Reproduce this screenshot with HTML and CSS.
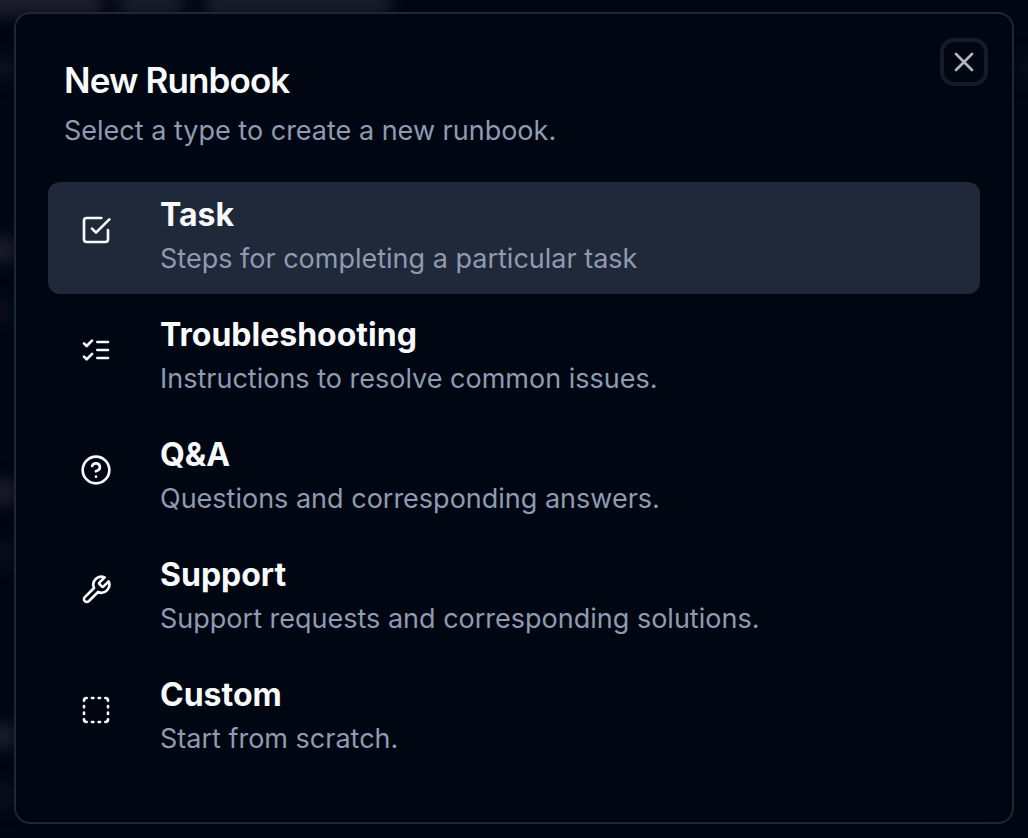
FILE: index.html
```html
<!DOCTYPE html>
<html lang="en">
<head>
<meta charset="utf-8">
<meta name="viewport" content="width=device-width, initial-scale=1">
<title>New Runbook</title>
<link rel="stylesheet" href="styles.css">
</head>
<body>
<div class="backdrop" aria-hidden="true"></div>
<main class="dialog" role="dialog" aria-labelledby="dialog-title" aria-describedby="dialog-description">
  <button class="close" type="button" aria-label="Close">
    <svg class="icon" viewBox="0 0 24 24"><path d="M18 6 6 18M6 6l12 12"/></svg>
  </button>
  <header class="header">
    <h1 class="title" id="dialog-title">New Runbook</h1>
    <p class="description" id="dialog-description">Select a type to create a new runbook.</p>
  </header>
  <div class="options">
    <button class="option option-active" type="button">
      <svg class="icon" viewBox="0 0 24 24" aria-hidden="true"><path d="m9 11 3 3L22 4"/><path d="M21 12v7a2 2 0 0 1-2 2H5a2 2 0 0 1-2-2V5a2 2 0 0 1 2-2h11"/></svg>
      <span class="option-text"><span class="option-name">Task</span><span class="option-detail">Steps for completing a particular task</span></span>
    </button>
    <button class="option" type="button">
      <svg class="icon" viewBox="0 0 24 24" aria-hidden="true"><path d="m3 17 2 2 4-4M3 7l2 2 4-4M13 6h8M13 12h8M13 18h8"/></svg>
      <span class="option-text"><span class="option-name">Troubleshooting</span><span class="option-detail">Instructions to resolve common issues.</span></span>
    </button>
    <button class="option" type="button">
      <svg class="icon" viewBox="0 0 24 24" aria-hidden="true"><circle cx="12" cy="12" r="10"/><path d="M9.09 9a3 3 0 0 1 5.83 1c0 2-3 3-3 3M12 17h.01"/></svg>
      <span class="option-text"><span class="option-name">Q&amp;A</span><span class="option-detail">Questions and corresponding answers.</span></span>
    </button>
    <button class="option" type="button">
      <svg class="icon" viewBox="0 0 24 24" aria-hidden="true"><path d="M14.7 6.3a1 1 0 0 0 0 1.4l1.6 1.6a1 1 0 0 0 1.4 0l3.77-3.77a6 6 0 0 1-7.94 7.94l-6.91 6.91a2.12 2.12 0 0 1-3-3l6.91-6.91a6 6 0 0 1 7.94-7.94l-3.76 3.76z"/></svg>
      <span class="option-text"><span class="option-name">Support</span><span class="option-detail">Support requests and corresponding solutions.</span></span>
    </button>
    <button class="option" type="button">
      <svg class="icon" viewBox="0 0 24 24" aria-hidden="true"><path d="M5 3a2 2 0 0 0-2 2M19 3a2 2 0 0 1 2 2M21 19a2 2 0 0 1-2 2M5 21a2 2 0 0 1-2-2M9 3h1M9 21h1M14 3h1M14 21h1M3 9v1M21 9v1M3 14v1M21 14v1"/></svg>
      <span class="option-text"><span class="option-name">Custom</span><span class="option-detail">Start from scratch.</span></span>
    </button>
  </div>
</main>
</body>
</html>
```
FILE: styles.css
```css
* {
  box-sizing: border-box;
}

body {
  margin: 0;
  min-height: 100vh;
  padding: 12px 14px 14px;
  display: flex;
  background: #010613;
  color: #f8fafc;
  font-family: Inter, "Liberation Sans", sans-serif;
}

/* Faint, blurred remains of the page behind the dialog */
.backdrop {
  position: fixed;
  inset: -20px;
  z-index: -1;
  filter: blur(8px);
  background:
    linear-gradient(#1c1d2b, #1c1d2b) 0 258px / 36px 24px no-repeat,
    linear-gradient(#1c1d2b, #1c1d2b) 0 500px / 36px 24px no-repeat,
    linear-gradient(#1c1d2b, #1c1d2b) 0 744px / 36px 24px no-repeat,
    linear-gradient(#0d111e, #0d111e) 0 76px / 36px 24px no-repeat,
    linear-gradient(#0a0e1b, #0a0e1b) 0 318px / 32px 24px no-repeat,
    linear-gradient(#0a0e1b, #0a0e1b) 0 562px / 36px 24px no-repeat,
    linear-gradient(#0a0e1b, #0a0e1b) 0 804px / 36px 24px no-repeat,
    linear-gradient(#0a0e1b, #0a0e1b) 100% 76px / 30px 24px no-repeat,
    linear-gradient(#1c1d2b, #1c1d2b) 0 0 / 122px 36px no-repeat,
    linear-gradient(#191d2b, #191d2b) 140px 0 / 62px 36px no-repeat,
    linear-gradient(#191d2b, #191d2b) 226px 0 / 184px 36px no-repeat;
}

.dialog {
  position: relative;
  flex: 1;
  padding: 46px 32px 48px;
  background: #010613;
  border: 2px solid #1e2637;
  border-radius: 16px;
}

.header {
  padding: 0 16px;
}

.title {
  margin: 0;
  font-size: 35px;
  line-height: 40px;
  font-weight: 600;
  letter-spacing: -0.025em;
}

.description {
  margin: 12px 0 0;
  font-size: 27px;
  line-height: 38px;
  color: #8e9bb1;
}

.icon {
  flex: none;
  width: 32px;
  height: 32px;
  fill: none;
  stroke: currentColor;
  stroke-width: 2;
  stroke-linecap: round;
  stroke-linejoin: round;
}

.close {
  position: absolute;
  top: 24px;
  right: 24px;
  display: grid;
  place-items: center;
  width: 48px;
  height: 48px;
  padding: 0;
  background: transparent;
  border: 4px solid #161b2a;
  border-radius: 14px;
  color: #b2b5b9;
}

.options {
  display: grid;
  gap: 8px;
  margin-top: 32px;
}

.option {
  display: flex;
  align-items: flex-start;
  gap: 48px;
  width: 100%;
  padding: 12px 32px 16px;
  border: 0;
  border-radius: 12px;
  background: transparent;
  color: inherit;
  font: inherit;
  text-align: left;
}

.option .icon {
  margin-top: 20px;
}

.option-active {
  background: #20293a;
}

.option-text {
  display: grid;
  gap: 4px;
}

.option-name {
  font-size: 32px;
  line-height: 42px;
  font-weight: 700;
}

.option-detail {
  font-size: 27px;
  line-height: 38px;
  color: #8e9bb1;
}
```
